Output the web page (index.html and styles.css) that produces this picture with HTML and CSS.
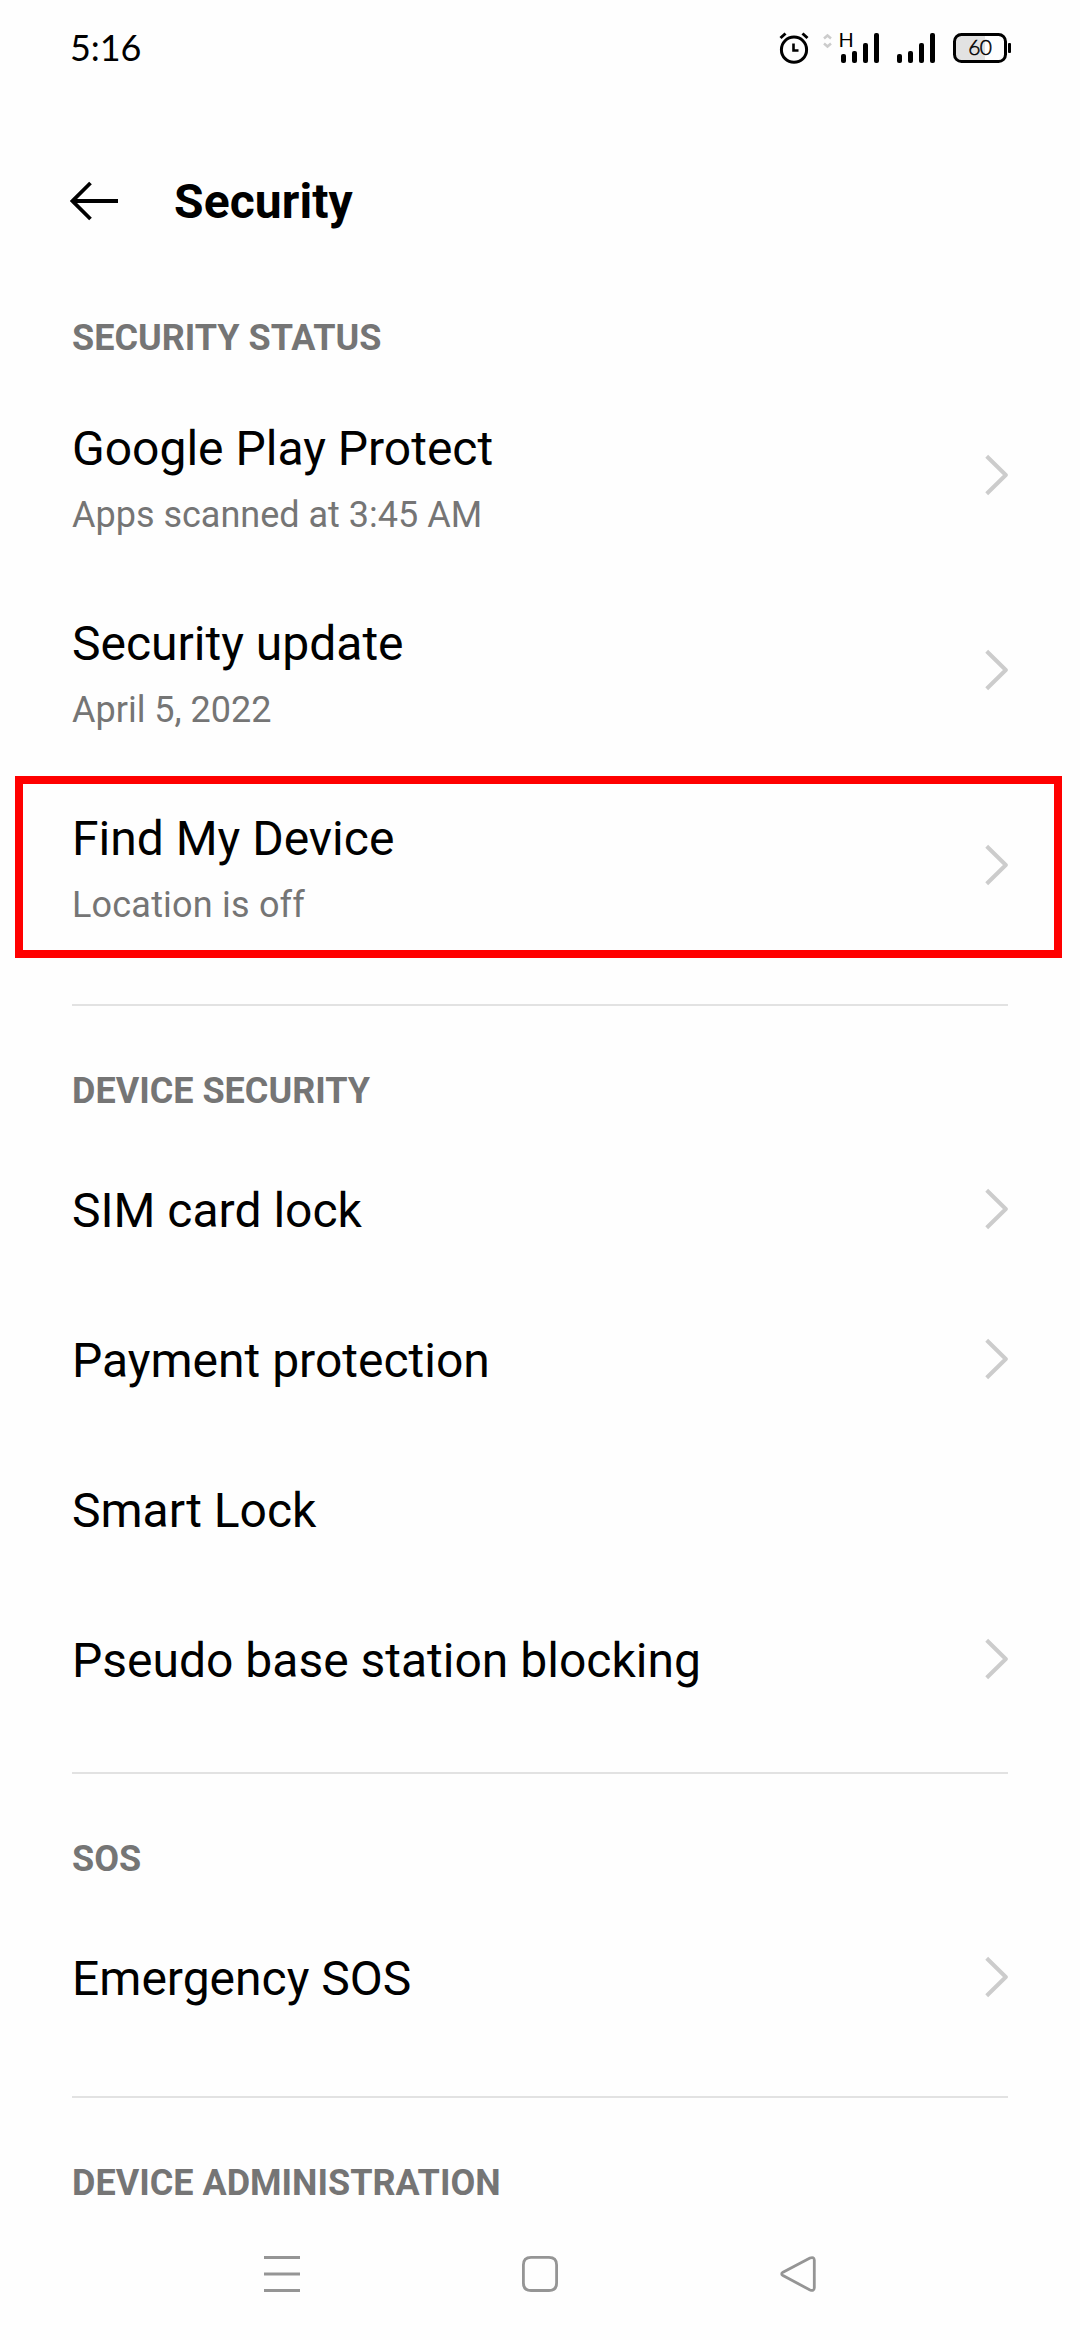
FILE: index.html
```html
<!DOCTYPE html>
<html lang="en">
<head>
<meta charset="utf-8">
<title>Security</title>
<link rel="stylesheet" href="styles.css">
</head>
<body>
<svg class="sprite" aria-hidden="true">
  <symbol id="chevron" viewBox="0 0 24 44"><path d="M2.700 3.200L21.800 22L2.700 40.800"/></symbol>
</svg>
<div class="screen">
  <header class="statusbar">
    <span class="clock">5:16</span>
    <svg class="status-icons" width="240" height="40" viewBox="770 28 240 40">
      <g fill="none" stroke="#000">
        <circle cx="794" cy="49.700" r="12.600" stroke-width="3"/>
        <path d="M793.500 43.500v7h5" stroke-width="2.600"/>
        <path d="M780.500 38l5-4.500M807.500 38l-5-4.500" stroke-width="3"/>
      </g>
      <path d="M824 38.500l3.500-3 3.500 3M824 43.500l3.500 3 3.500-3" fill="none" stroke="#ccc" stroke-width="2.500"/>
      <text class="network" x="838.500" y="46.500">H</text>
      <g>
        <rect x="841" y="54" width="5" height="9" rx="2"/><rect x="852" y="51" width="5" height="12" rx="2"/><rect x="863" y="43" width="5" height="20" rx="2"/><rect x="874" y="33" width="5" height="30" rx="2"/>
        <rect x="897" y="54" width="5" height="9" rx="2"/><rect x="908" y="51" width="5" height="12" rx="2"/><rect x="919" y="43" width="5" height="20" rx="2"/><rect x="930" y="33" width="5" height="30" rx="2"/>
      </g>
      <path d="M961 35h24v26h-24q-6 0-6-6V41q0-6 6-6z" fill="#e2e2e2"/>
      <rect x="954.500" y="34.500" width="51" height="27" rx="7" fill="none" stroke="#000" stroke-width="3"/>
      <rect x="1008" y="43" width="3" height="10" rx="1"/>
      <text class="battery" x="979.700" y="55.200" text-anchor="middle">60</text>
    </svg>
  </header>
  <div class="titlebar">
    <svg class="back" width="50" height="42" viewBox="0 0 50 42"><path d="M20.500 3L2.500 21l18 18M2.500 21H48"/></svg>
    <h1 class="title">Security</h1>
  </div>
  <main class="content">
    <section class="group status">
      <h2 class="heading">SECURITY STATUS</h2>
      <div class="row tall"><div class="label"><div class="name">Google Play Protect</div><div class="note">Apps scanned at 3:45 AM</div></div><svg class="chevron"><use href="#chevron"/></svg></div>
      <div class="row tall"><div class="label"><div class="name">Security update</div><div class="note">April 5, 2022</div></div><svg class="chevron"><use href="#chevron"/></svg></div>
      <div class="row tall"><div class="label"><div class="name">Find My Device</div><div class="note loose">Location is off</div></div><svg class="chevron"><use href="#chevron"/></svg><div class="highlight"></div></div>
    </section>
    <section class="group device">
      <h2 class="heading">DEVICE SECURITY</h2>
      <div class="row"><div class="name">SIM card lock</div><svg class="chevron"><use href="#chevron"/></svg></div>
      <div class="row"><div class="name">Payment protection</div><svg class="chevron"><use href="#chevron"/></svg></div>
      <div class="row"><div class="name">Smart Lock</div></div>
      <div class="row"><div class="name">Pseudo base station blocking</div><svg class="chevron"><use href="#chevron"/></svg></div>
    </section>
    <section class="group sos">
      <h2 class="heading">SOS</h2>
      <div class="row"><div class="name">Emergency SOS</div><svg class="chevron"><use href="#chevron"/></svg></div>
    </section>
    <section class="group admin">
      <h2 class="heading">DEVICE ADMINISTRATION</h2>
    </section>
  </main>
  <nav class="navbar">
    <svg width="44" height="44" viewBox="0 0 44 44"><path d="M4 5.500h36M4 22h36M4 38.500h36"/></svg>
    <svg width="44" height="44" viewBox="0 0 44 44"><path d="M13 5.300h18q7.600 0 7.600 7.600v18q0 7.600-7.600 7.600h-18q-7.600 0-7.600-7.600v-18q0-7.600 7.600-7.600z"/></svg>
    <svg width="44" height="44" viewBox="0 0 44 44"><path d="M34 6L7 20.200q-2.600 1.700 0 3.400L34 38q4 1.500 4.300-2V8q-.3-3.500-4.300-2z"/></svg>
  </nav>
</div>
</body>
</html>
```
FILE: styles.css
```css
* { box-sizing: border-box; }
body { margin: 0; background: #fefefe; color: #000; font-family: Roboto, "Noto Sans", sans-serif; }
.sprite { display: none; }
.screen { display: flex; flex-direction: column; width: 1080px; height: 2340px; overflow: hidden; }
.statusbar { display: flex; justify-content: space-between; align-items: center; height: 96px; padding: 0 70px; }
.clock { padding-bottom: 3px; font-family: Lato, sans-serif; font-size: 36px; letter-spacing: -0.1px; }
.status-icons { overflow: visible; }
.network { font: 400 20px Lato, sans-serif; }
.battery { font: 300 21px Lato, sans-serif; letter-spacing: -0.8px; stroke: #000; stroke-width: 0.5px; }
.titlebar { display: flex; align-items: center; gap: 54px; height: 210px; padding: 0 70px; }
.back { fill: none; stroke: #000; stroke-width: 3.8; }
.title { margin: 0; padding-top: 1px; font-size: 48px; font-weight: 700; line-height: 60px; letter-spacing: 0.1px; }
.content { flex: 1; padding: 0 72px; }
.status { padding-bottom: 41px; }
.device { padding-bottom: 36px; }
.sos { padding-bottom: 42px; }
.group + .group { border-top: 2px solid #e2e2e2; }
.heading { margin: 0; padding-top: 63px; height: 130px; color: #757575; font-size: 36px; font-weight: 700; line-height: 44px; }
.status .heading { padding-top: 10px; height: 72px; }
.admin .heading { height: 107px; }
.row { position: relative; display: flex; align-items: center; justify-content: space-between; height: 150px; }
.row.tall { height: 195px; }
.label { padding-top: 7px; }
.name { font-size: 48px; line-height: 60px; }
.note { margin-top: 11px; color: #757575; font-size: 36px; line-height: 50px; font-variant-ligatures: none; }
.note.loose { letter-spacing: 0.2px; }
.chevron { width: 24px; height: 44px; margin-bottom: 4px; fill: none; stroke: #ccc; stroke-width: 4; stroke-linejoin: round; }
.tall .chevron { margin-bottom: 1px; }
.highlight { position: absolute; inset: 8px -54px 5px -57px; border: 8px solid #f00; }
.navbar { display: flex; justify-content: space-between; align-items: center; height: 132px; padding: 0 260px; fill: none; stroke: #959595; stroke-width: 2.8; }
```
